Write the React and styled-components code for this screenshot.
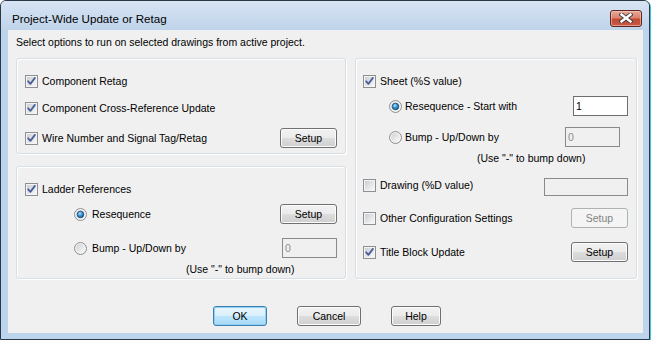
import React, { useId } from 'react';
import styled, { createGlobalStyle, css } from 'styled-components';

const GlobalStyle = createGlobalStyle`
  html, body {
    margin: 0;
    padding: 0;
    background: #ffffff;
  }
  body {
    font-family: "Liberation Sans", Arial, sans-serif;
    font-size: 10.5px;
    color: #000;
  }
`;

const Window = styled.div`
  width: 650px;
  height: 340px;
  box-sizing: border-box;
  border: 1px solid #2c3845;
  border-radius: 6px 6px 0 0;
  background: #bcd4ec;
  box-shadow: 1px 1px 0 #38c6ea;
  display: flex;
  flex-direction: column;
  overflow: hidden;
`;

const TitleBar = styled.div`
  height: 29px;
  box-sizing: border-box;
  padding: 5px 7px 0 11px;
  display: flex;
  align-items: center;
  justify-content: space-between;
  background: linear-gradient(to bottom, #d7e4f3 0%, #c9daee 60%, #bfd4ea 100%);
`;

const Title = styled.span`
  font-size: 11.6px;
  color: #000;
`;

const CloseButton = styled.div`
  width: 32px;
  height: 17px;
  box-sizing: border-box;
  border: 1px solid #5a2620;
  border-radius: 3px;
  background: linear-gradient(to bottom, #e8a899 0%, #d98471 45%, #c24a34 55%, #c85845 100%);
  box-shadow: inset 0 0 0 1px rgba(255, 210, 200, 0.55);
  display: flex;
  align-items: center;
  justify-content: center;
`;

const Client = styled.div`
  flex: 1;
  margin: 0 6px 6px 7px;
  background: #f0f0f0;
  display: flex;
  flex-direction: column;
`;

const Intro = styled.div`
  margin: 5px 0 0 8px;
  line-height: 14px;
`;

const Columns = styled.div`
  display: flex;
  gap: 9px;
  margin: 9px 0 0 8px;
`;

const Column = styled.div`
  display: flex;
  flex-direction: column;
  gap: 12px;
  width: ${p => p.$w}px;
`;

const GroupBox = styled.div`
  box-sizing: border-box;
  width: ${p => p.$w}px;
  height: ${p => p.$h}px;
  border: 1px solid #d5dfe5;
  border-radius: 3px;
  box-shadow: inset 1px 1px 0 #ffffff, 1px 1px 0 #ffffff;
  padding: 0 8px 0 ${p => p.$pl ?? 8}px;
  display: flex;
  flex-direction: column;
`;

const Row = styled.div`
  display: flex;
  align-items: center;
  height: ${p => p.$h ?? 20}px;
  margin-top: ${p => p.$mt ?? 0}px;
  padding-left: ${p => p.$indent ?? 0}px;
  white-space: nowrap;
`;

const Label = styled.label`
  display: flex;
  align-items: center;
  gap: ${p => p.$gap ?? 4}px;
  line-height: 14px;
`;

const Note = styled.span`
  line-height: 14px;
`;

const Button = styled.div`
  box-sizing: border-box;
  width: ${p => p.$w ?? 57}px;
  height: 20px;
  margin-left: ${p => (p.$push ? 'auto' : '0')};
  border: 1px solid #707070;
  border-radius: 3px;
  background: linear-gradient(to bottom, #f2f2f2 0%, #ebebeb 50%, #dddddd 50%, #cfcfcf 100%);
  box-shadow: inset 0 0 0 1px #fcfcfc;
  display: flex;
  align-items: center;
  justify-content: center;
  color: #000;
  ${p =>
    p.$default &&
    css`
      border-color: #3c7fb1;
      background: linear-gradient(to bottom, #eaf6fd 0%, #d9f0fc 50%, #bee6fd 50%, #a7d9f5 100%);
      box-shadow: inset 0 0 0 1px #8fd2f5;
    `}
  ${p =>
    p.$disabled &&
    css`
      border-color: #adb2b5;
      background: #f4f4f4;
      box-shadow: none;
      color: #838383;
    `}
`;

const TextBox = styled.div`
  box-sizing: border-box;
  width: ${p => p.$w ?? 55}px;
  height: ${p => p.$h ?? 20}px;
  margin-left: auto;
  margin-right: ${p => p.$mr ?? 0}px;
  margin-top: ${p => p.$mt ?? 0}px;
  border: 1px solid ${p => (p.$disabled ? '#8a8a8a' : '#6e6e6e')};
  background: ${p => (p.$disabled ? '#f0f0f0' : '#ffffff')};
  color: ${p => (p.$disabled ? '#8d8d8d' : '#000')};
  padding: 0 0 0 2px;
  display: flex;
  align-items: center;
`;

const ButtonBar = styled.div`
  display: flex;
  justify-content: center;
  gap: 30px;
  margin-top: 27px;
  padding-left: 3px;
`;

const CheckBox = ({ checked }) => {
  const id = useId();
  return (
    <svg width="13" height="13" viewBox="0 0 13 13">
      <defs>
        <linearGradient id={id} x1="0" y1="0" x2="1" y2="1">
          <stop offset="0" stopColor="#cbcfd5" />
          <stop offset="1" stopColor="#f7f7f7" />
        </linearGradient>
      </defs>
      <rect x="0.5" y="0.5" width="12" height="12" fill="#f4f4f4" stroke="#8e8f8f" />
      <rect x="2" y="2" width="9" height="9" fill={`url(#${id})`} />
      {checked && (
        <path d="M3.2 6.3 L5.4 8.9 L9.9 2.9" fill="none" stroke="#4b5f99" strokeWidth="1.8" strokeLinecap="round" strokeLinejoin="round" />
      )}
    </svg>
  );
};

const Radio = ({ checked }) => {
  const id = useId();
  return (
    <svg width="13" height="13" viewBox="0 0 13 13">
      <defs>
        <linearGradient id={`${id}a`} x1="0" y1="0" x2="1" y2="1">
          <stop offset="0" stopColor="#cfd2d6" />
          <stop offset="1" stopColor="#fafafa" />
        </linearGradient>
        <radialGradient id={`${id}b`} cx="0.4" cy="0.35" r="0.7">
          <stop offset="0" stopColor="#b6e6ff" />
          <stop offset="0.45" stopColor="#3a9ad8" />
          <stop offset="1" stopColor="#0e4f86" />
        </radialGradient>
      </defs>
      <circle cx="6.5" cy="6.5" r="6" fill="#f2f2f2" stroke="#8e8f8f" />
      <circle cx="6.5" cy="6.5" r="4.5" fill={`url(#${id}a)`} />
      {checked && <circle cx="6.5" cy="6.5" r="3.3" fill={`url(#${id}b)`} stroke="#1c4a74" strokeWidth="0.8" />}
    </svg>
  );
};

const CloseGlyph = () => (
  <svg width="14" height="10" viewBox="0 0 14 10">
    <path d="M2.5 1.5 L11.5 8.5 M11.5 1.5 L2.5 8.5" stroke="#3d3d3d" strokeWidth="4.2" strokeLinecap="square" />
    <path d="M2.5 1.5 L11.5 8.5 M11.5 1.5 L2.5 8.5" stroke="#ffffff" strokeWidth="2.4" strokeLinecap="square" />
  </svg>
);

const App = () => (
  <>
    <GlobalStyle />
    <Window>
      <TitleBar>
        <Title>Project-Wide Update or Retag</Title>
        <CloseButton>
          <CloseGlyph />
        </CloseButton>
      </TitleBar>
      <Client>
        <Intro>Select options to run on selected drawings from active project.</Intro>
        <Columns>
          <Column $w={330}>
            <GroupBox $w={330} $h={96}>
              <Row $mt={12}>
                <Label><CheckBox checked />Component Retag</Label>
              </Row>
              <Row $mt={7}>
                <Label><CheckBox checked />Component Cross-Reference Update</Label>
              </Row>
              <Row $mt={10}>
                <Label><CheckBox checked />Wire Number and Signal Tag/Retag</Label>
                <Button $push>Setup</Button>
              </Row>
            </GroupBox>
            <GroupBox $w={330} $h={113}>
              <Row $mt={12}>
                <Label><CheckBox checked />Ladder References</Label>
              </Row>
              <Row $mt={5} $indent={49}>
                <Label $gap={5}><Radio checked />Resequence</Label>
                <Button $push>Setup</Button>
              </Row>
              <Row $mt={14} $indent={49}>
                <Label $gap={5}><Radio />Bump - Up/Down by</Label>
                <TextBox $disabled>0</TextBox>
              </Row>
              <Row $mt={4} $h={14} $indent={161}>
                <Note>(Use "-" to bump down)</Note>
              </Row>
            </GroupBox>
          </Column>
          <GroupBox $w={282} $h={221} $pl={7}>
            <Row $mt={12}>
              <Label><CheckBox checked />Sheet (%S value)</Label>
            </Row>
            <Row $mt={5} $indent={26}>
              <Label $gap={3}><Radio checked />Resequence - Start with</Label>
              <TextBox>1</TextBox>
            </Row>
            <Row $mt={11} $indent={26}>
              <Label $gap={3}><Radio />Bump - Up/Down by</Label>
              <TextBox $disabled $mr={8}>0</TextBox>
            </Row>
            <Row $mt={4} $h={14} $indent={114}>
              <Note>(Use "-" to bump down)</Note>
            </Row>
            <Row $mt={10}>
              <Label><CheckBox />Drawing (%D value)</Label>
              <TextBox $disabled $w={84} $h={18} $mt={3} />
            </Row>
            <Row $mt={13}>
              <Label><CheckBox />Other Configuration Settings</Label>
              <Button $push $disabled>Setup</Button>
            </Row>
            <Row $mt={14}>
              <Label><CheckBox checked />Title Block Update</Label>
              <Button $push>Setup</Button>
            </Row>
          </GroupBox>
        </Columns>
        <ButtonBar>
          <Button $w={54} $default>OK</Button>
          <Button $w={64}>Cancel</Button>
          <Button $w={50}>Help</Button>
        </ButtonBar>
      </Client>
    </Window>
  </>
);

export default App;
